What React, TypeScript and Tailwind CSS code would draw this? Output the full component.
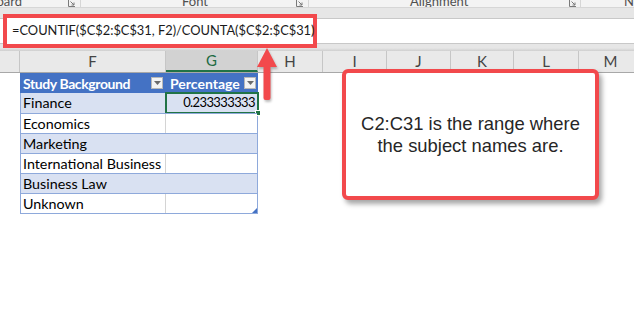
import React from "react";

const calibri = { fontFamily: "Lato, 'Noto Sans', sans-serif" };

type Row = { name: string; value?: string; band: boolean };

const rows: Row[] = [
  { name: "Finance", value: "0.233333333", band: true },
  { name: "Economics", band: false },
  { name: "Marketing", band: true },
  { name: "International Business", band: false },
  { name: "Business Law", band: true },
  { name: "Unknown", band: false },
];

const columns = [
  { letter: "", w: "w-[20px]" },
  { letter: "F", w: "w-[146px]" },
  { letter: "G", w: "w-[92px]", active: true },
  { letter: "H", w: "w-[65px]" },
  { letter: "I", w: "w-[64px]" },
  { letter: "J", w: "w-[64px]" },
  { letter: "K", w: "w-[63px]" },
  { letter: "L", w: "w-[65px]" },
  { letter: "M", w: "w-[64px]" },
];

const groups = [
  { label: "Clipboard", w: "w-[81px]", pr: "pr-[5px]", shift: "ml-[-33px]", launcher: true },
  { label: "Font", w: "w-[228px]", pr: "pr-[5px]", shift: "ml-[101px]", launcher: true },
  { label: "Alignment", w: "w-[272px]", pr: "pr-[4px]", shift: "ml-[101px]", launcher: true },
  { label: "Number", w: "w-[120px]", pr: "", shift: "ml-[43px]", launcher: false },
];

function FilterButton() {
  return (
    <div className="w-[12px] h-[12px] shrink-0 bg-[#f4f4f4] border border-[#b8b8b8] flex items-center justify-center">
      <svg width="7" height="4" viewBox="0 0 7 4">
        <path d="M0 0 H7 L3.5 4 Z" fill="#6b6b6b" />
      </svg>
    </div>
  );
}

function Launcher() {
  return (
    <svg width="7" height="7" viewBox="0 0 7 7" className="shrink-0">
      <path d="M0.5 0 V6.5 H7" stroke="#7a7a7a" fill="none" />
      <path d="M2.5 1.5 L6 5 M6 2.5 V5 H3.5" stroke="#7a7a7a" fill="none" />
    </svg>
  );
}

function RibbonLabels() {
  return (
    <div
      className="h-[8px] bg-[#f3f3f3] border-b border-[#d6d6d6] overflow-hidden flex text-[13px] text-[#505050] leading-none"
      style={calibri}
    >
      {groups.map((g) => (
        <div
          key={g.label}
          className={"shrink-0 h-full flex items-start border-r border-[#d6d6d6] " + g.w + " " + g.pr}
        >
          <span className={"shrink-0 mt-[-5px] whitespace-nowrap " + g.shift}>{g.label}</span>
          <span className="flex-1" />
          {g.launcher && <Launcher />}
        </div>
      ))}
    </div>
  );
}

function FormulaBar() {
  return (
    <div className="h-[43px] bg-[#e6e6e6] pt-[10px] flex flex-col">
      <div className="h-[26px] bg-white border-y border-[#c8c8c8] flex items-center">
        <div className="ml-[3px] shrink-0 w-[314px] h-[34px] border-[4px] border-[#f2494c] bg-white flex items-center pl-[5px]">
          <span className="text-[12.85px] text-[#1a1a1a] whitespace-nowrap" style={calibri}>
            =COUNTIF($C$2:$C$31, F2)/COUNTA($C$2:$C$31)
          </span>
        </div>
      </div>
      <div className="flex-1" />
      <div className="h-[3px] bg-gradient-to-b from-[#e6e6e6] to-[#cfcfcf]" />
    </div>
  );
}

function ColumnHeaders() {
  return (
    <div className="flex h-[22px] bg-[#e9e9e9] border-b border-[#a8a8a8]" style={calibri}>
      {columns.map((c, i) => (
        <div
          key={i}
          className={
            "shrink-0 h-full flex items-center justify-center text-[15px] border-r border-[#c6c6c6] " +
            c.w +
            (c.active
              ? " bg-[#d2d2d2] text-[#1e6b43] border-b-2 border-b-[#217346]"
              : " text-[#444444]")
          }
        >
          {c.letter}
        </div>
      ))}
    </div>
  );
}

function Table() {
  return (
    <div className="ml-[20px] w-[238px] text-[14.3px] text-black" style={calibri}>
      <div className="flex h-[20px] bg-[#4472c4] text-white font-bold text-[14px]">
        <div className="w-[146px] flex items-center pl-[3px] pr-[3px] justify-between">
          <span className="tracking-[-0.4px]">Study Background</span>
          <FilterButton />
        </div>
        <div className="w-[92px] flex items-center pl-[4px] pr-[2px] justify-between">
          <span>Percentage</span>
          <FilterButton />
        </div>
      </div>
      <div className="border-x border-b border-[#8ea9db] relative">
        {rows.map((r, i) => (
          <div
            key={r.name}
            className={
              "flex h-[20px] relative " +
              (i > 0 ? "border-t border-[#8ea9db] " : "") +
              (r.band ? "bg-[#d9e1f2]" : "bg-white")
            }
          >
            <div
              className={
                "w-[145px] flex items-center pl-[2px] whitespace-nowrap " +
                (r.band ? "" : "border-r border-[#d4d4d4]")
              }
            >
              {r.name}
            </div>
            <div className="flex-1 flex items-center justify-end pr-[2px] text-[13px] tracking-[-0.6px]">
              {r.value ?? ""}
            </div>
            {i === 0 && (
              <div className="absolute left-[144px] top-[-1px] w-[94px] h-[22px] border-2 border-[#217346]">
                <div className="absolute right-[-4px] bottom-[-4px] w-[6px] h-[6px] bg-[#217346] border border-white" />
              </div>
            )}
          </div>
        ))}
        <svg width="5" height="5" viewBox="0 0 5 5" className="absolute right-0 bottom-0">
          <path d="M5 0 V5 H0 Z" fill="#4472c4" />
        </svg>
      </div>
    </div>
  );
}

function Callout() {
  return (
    <div className="absolute left-[342px] top-[69px] w-[257px] h-[131px] rounded-[6px] border-[4px] border-[#f2494c] bg-white shadow-[3px_4px_5px_rgba(0,0,0,0.35)] flex items-center justify-center">
      <p
        className="text-center text-[18.4px] leading-[22px] text-[#262626]"
        style={{ fontFamily: "'Liberation Sans', Arial, sans-serif" }}
      >
        C2:C31 is the range where
        <br />
        the subject names are.
      </p>
    </div>
  );
}

function UpArrow() {
  return (
    <svg
      width="24"
      height="56"
      viewBox="0 0 24 56"
      className="absolute left-[255px] top-[46px] drop-shadow-[1px_2px_1px_rgba(0,0,0,0.25)]"
    >
      <path
        d="M12 2 L22 21 L15.5 21 L15.5 52 Q15.5 54 13.5 54 L10.5 54 Q8.5 54 8.5 52 L8.5 21 L2 21 Z"
        fill="#f2494c"
      />
    </svg>
  );
}

export default function App() {
  return (
    <div className="w-[634px] h-[310px] bg-white relative overflow-hidden">
      <RibbonLabels />
      <FormulaBar />
      <ColumnHeaders />
      <Table />
      <UpArrow />
      <Callout />
    </div>
  );
}
